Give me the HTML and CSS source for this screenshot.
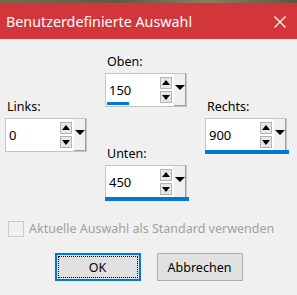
FILE: index.html
```html
<!DOCTYPE html>
<html lang="de">
  <head>
    <meta charset="UTF-8">
    <title>Benutzerdefinierte Auswahl</title>
    <link rel="stylesheet" href="styles.css">
  </head>
  <body>
    <div class="wallpaper"></div>
    <div class="titlebar">
      <span class="title">Benutzerdefinierte Auswahl</span>
      <svg class="close" width="12" height="12" viewBox="0 0 12 12">
        <path d="M0.5 0.5 L11.5 11.5 M11.5 0.5 L0.5 11.5" stroke="#fff" stroke-width="1.2" fill="none"/>
      </svg>
    </div>
    <div class="dialog">
      <div class="fields">
        <div class="col side">
          <div class="group">
            <label>Links:</label>
            <div class="spin">
              <div class="field">
                <span class="value">0</span>
                <div class="arrows">
                  <span class="arr up"></span>
                  <span class="arr down"></span>
                </div>
              </div>
              <div class="drop"><span class="tri"></span></div>
            </div>
          </div>
        </div>
        <div class="col middle">
          <div class="group">
            <label>Oben:</label>
            <div class="spin">
              <div class="field">
                <span class="value">150</span>
                <div class="arrows">
                  <span class="arr up"></span>
                  <span class="arr down"></span>
                </div>
                <span class="bar" style="width: 22px"></span>
              </div>
              <div class="drop"><span class="tri"></span></div>
            </div>
          </div>
          <div class="group">
            <label>Unten:</label>
            <div class="spin">
              <div class="field">
                <span class="value">450</span>
                <div class="arrows">
                  <span class="arr up"></span>
                  <span class="arr down"></span>
                </div>
                <span class="bar full"></span>
              </div>
              <div class="drop"><span class="tri"></span></div>
            </div>
          </div>
        </div>
        <div class="col side">
          <div class="group">
            <label>Rechts:</label>
            <div class="spin">
              <div class="field">
                <span class="value">900</span>
                <div class="arrows">
                  <span class="arr up"></span>
                  <span class="arr down"></span>
                </div>
                <span class="bar full"></span>
              </div>
              <div class="drop"><span class="tri"></span></div>
            </div>
          </div>
        </div>
      </div>
      <div class="check">
        <span class="box"></span>
        <span class="check-text">Aktuelle Auswahl als Standard verwenden</span>
      </div>
      <div class="buttons">
        <button class="btn default"><span>OK</span></button>
        <button class="btn">Abbrechen</button>
      </div>
    </div>
  </body>
</html>
```

FILE: styles.css
```css
body {
  margin: 0;
  padding: 0;
  width: 297px;
  height: 295px;
  background: #f0f0f0;
  font-family: "Noto Sans", "Open Sans", sans-serif;
  overflow: hidden;
}

.wallpaper {
  height: 3px;
  background: linear-gradient(90deg, #7a6a4c, #5d5a44 40%, #8b7d5e 70%, #5a5840);
}

.titlebar {
  height: 36px;
  background: #d2363b;
  display: flex;
  align-items: center;
  justify-content: space-between;
  padding: 0 11px 0 6px;
}

.title {
  color: #fff;
  font-size: 14.3px;
  margin-top: 1px;
}

.close {
  margin-top: 2px;
}

.dialog {
  padding: 15px 0 0 5px;
}

.fields {
  display: flex;
  gap: 18px;
  height: 146px;
}

.col {
  width: 82px;
  display: flex;
  flex-direction: column;
}

.side {
  padding-top: 45px;
}

.middle {
  gap: 39px;
}

.group label {
  display: block;
  font-size: 12.5px;
  line-height: 16px;
  color: #000;
  margin-bottom: 3px;
  padding-left: 2px;
}

.spin {
  display: flex;
  height: 34px;
}

.field {
  position: relative;
  flex: 1;
  background: #fff;
  border: 1px solid #c4c4c4;
  border-right: none;
  display: flex;
  align-items: center;
  justify-content: space-between;
  padding: 0 2px 0 2px;
}

.value {
  font-size: 13px;
  color: #000;
  padding-left: 1px;
}

.arrows {
  display: flex;
  flex-direction: column;
  gap: 2px;
}

.arr {
  width: 10px;
  height: 10px;
  background: #e6e6e6;
  border: 1px solid #b4b4b4;
  position: relative;
}

.arr::after {
  content: "";
  position: absolute;
  left: 1px;
  border-left: 4px solid transparent;
  border-right: 4px solid transparent;
}

.up::after {
  top: 2px;
  border-bottom: 5px solid #000;
}

.down::after {
  top: 3px;
  border-top: 5px solid #000;
}

.bar {
  position: absolute;
  left: 1px;
  bottom: 1px;
  height: 3px;
  background: #0078d7;
}

.bar.full {
  left: -1px;
  right: -15px;
  bottom: -3px;
  height: 4px;
}

.drop {
  width: 13px;
  background: #f0f0f0;
  border: 1px solid #c4c4c4;
  border-left: none;
  box-shadow: inset -1px -1px 0 #a0a0a0;
  display: flex;
  justify-content: center;
  padding-top: 11px;
  box-sizing: border-box;
}

.tri {
  width: 0;
  height: 0;
  border-left: 5px solid transparent;
  border-right: 5px solid transparent;
  border-top: 5px solid #000;
}

.check {
  display: flex;
  align-items: center;
  gap: 5px;
  margin: 20px 0 0 3px;
}

.box {
  width: 14px;
  height: 14px;
  border: 1px solid #cccccc;
  background: #f0f0f0;
}

.check-text {
  font-size: 12.5px;
  color: #a0a0a0;
}

.buttons {
  display: flex;
  justify-content: center;
  gap: 16px;
  margin-top: 16px;
  padding-right: 5px;
}

.btn {
  width: 86px;
  height: 28px;
  font-family: "Noto Sans", "Open Sans", sans-serif;
  font-size: 12.5px;
  color: #000;
  background: #e1e1e1;
  border: 1px solid #adadad;
  padding: 0;
}

.btn.default {
  border: 2px solid #0078d7;
  padding: 1px;
}

.btn.default span {
  display: flex;
  align-items: center;
  justify-content: center;
  height: 100%;
  box-sizing: border-box;
  border: 1px dotted #000;
}
```
